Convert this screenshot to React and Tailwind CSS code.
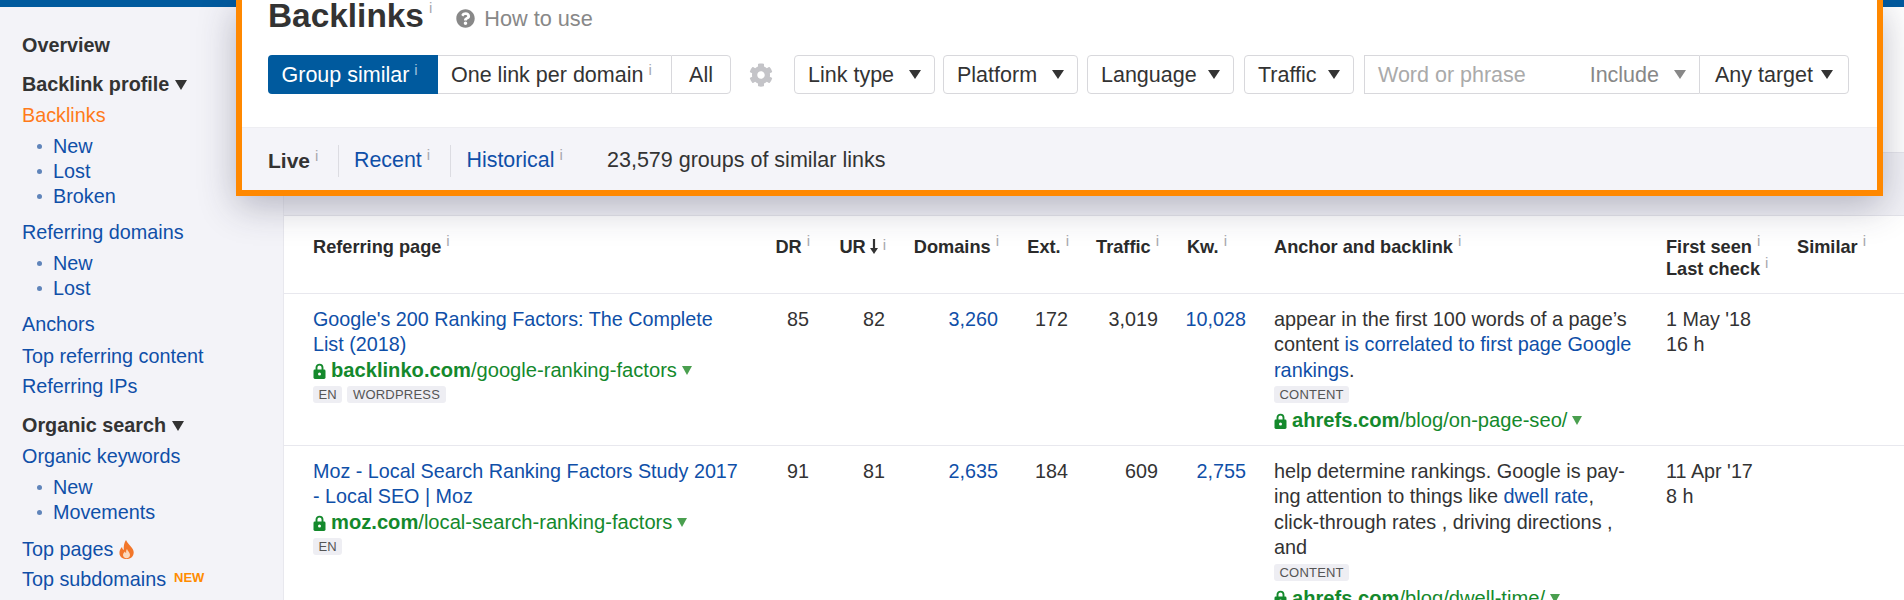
import React from "react";
import { FaCog, FaQuestionCircle } from "react-icons/fa";

const I = ({ className = "" }) => (
  <span className={`font-normal text-[#a8a8ae] text-[15px] leading-[0] align-[7px] ml-[5px] ${className}`}>i</span>
);

const Caret = ({ w = 12, h = 9, color = "#333", className = "" }) => (
  <svg width={w} height={h} viewBox="0 0 12 9" preserveAspectRatio="none" className={`shrink-0 ${className}`}>
    <polygon points="0,0 12,0 6,9" fill={color} />
  </svg>
);

const Lock = () => (
  <svg width="13" height="16" viewBox="0 0 13 16" className="shrink-0 mr-[5px]">
    <path d="M3.5 7V4.6a3 3 0 0 1 6 0V7" fill="none" stroke="#14892c" strokeWidth="1.9" />
    <rect x="0.5" y="6.5" width="12" height="9.5" rx="1.4" fill="#14892c" />
    <circle cx="6.5" cy="11" r="1.5" fill="#fff" />
  </svg>
);

const Flame = () => (
  <svg width="15" height="19" viewBox="0 0 15 19" className="ml-[6px] shrink-0">
    <path d="M7 0C8 3 11 5 13 8C14.5 10 15 12 14.5 14C14 17 11 19 7.5 19C4 19 1 17 .5 14C0 11 1.5 8.5 3 7C3.3 8.5 3.8 9.5 4.8 10C4.5 6 5 3 7 0Z" fill="#f2762a" />
    <path d="M8 9C8.5 11 11 12.5 11 15C11 17 9.5 18.2 7.5 18.2C5.5 18.2 4 17 4 15C4 13.5 5 12.5 6 11.5C6.3 12.5 6.7 13 7.2 13C7 11.5 7.2 10 8 9Z" fill="#fbd9bd" />
  </svg>
);

const Url = ({ domain, path }) => (
  <div className="flex items-center text-[20.15px] leading-[25.4px] text-[#14892c] whitespace-nowrap">
    <Lock />
    <span><span className="font-bold">{domain}</span>{path}</span>
    <Caret w={10} h={9} color="#4a9f4f" className="ml-[5px]" />
  </div>
);

const Tag = ({ children }) => (
  <span className="inline-flex items-center h-[17px] px-[5.5px] mr-[5px] rounded-[3px] bg-[#eeeef3] text-[#555] text-[13px] tracking-[0.2px] leading-none">
    {children}
  </span>
);

const A = ({ children }) => <a className="text-[#0f4fa8]">{children}</a>;

const NavHead = ({ children, className = "", caret }) => (
  <div className={`h-[25px] leading-[25px] font-bold text-[#333] flex items-center ${className}`}>
    {children}
    {caret && <Caret w={12} h={10} color="#333" className="ml-[6px]" />}
  </div>
);

const NavLink = ({ children, className = "" }) => (
  <div className={`h-[25px] leading-[25px] text-[#0f4fa8] flex items-center ${className}`}>{children}</div>
);

const Sub = ({ children, className = "" }) => (
  <div className={`h-[25px] leading-[25px] text-[#0f4fa8] flex items-center pl-[15px] ${className}`}>
    <span className="w-[5px] h-[5px] rounded-full bg-[#5f84ba] mr-[11px]" />
    {children}
  </div>
);

const Btn = ({ children, w, className = "" }) => (
  <div className={`h-[39px] flex items-center justify-between px-[13px] bg-white border-[1.5px] border-[#d8d8dc] rounded-[4px] text-[#333] ${w} ${className}`}>
    <span className="pt-[2px]">{children}</span>
    <Caret />
  </div>
);

const grid = "grid grid-cols-[430px_66px_76px_113px_70px_90px_88px_420px_131px_1fr] pl-[29px]";

const Th = ({ children, className = "" }) => (
  <div className={`text-right whitespace-nowrap -mr-[1px] ${className}`}>{children}</div>
);

const Num = ({ children, link }) => (
  <div className={`text-right ${link ? "text-[#0f4fa8]" : "text-[#333]"}`}>{children}</div>
);

export default function App() {
  return (
    <div className="relative w-[1904px] h-[600px] overflow-hidden bg-[#f3f3f8] font-['Liberation_Sans',Arial,sans-serif] text-[19.8px] text-[#333]">
      <div className="h-[7px] bg-[#005a9e]" />
      <div className="flex h-[593px]">
        <aside className="w-[284px] shrink-0 pl-[22px] pt-[26px] border-r border-[#e8e8ee]">
          <NavHead>Overview</NavHead>
          <NavHead caret className="mt-[14px]">Backlink profile</NavHead>
          <NavLink className="mt-[6px] !text-[#ff7a1a]">Backlinks</NavLink>
          <Sub className="mt-[6px]">New</Sub>
          <Sub>Lost</Sub>
          <Sub>Broken</Sub>
          <NavLink className="mt-[11px]">Referring domains</NavLink>
          <Sub className="mt-[6px]">New</Sub>
          <Sub>Lost</Sub>
          <NavLink className="mt-[11px]">Anchors</NavLink>
          <NavLink className="mt-[7px]">Top referring content</NavLink>
          <NavLink className="mt-[5px]">Referring IPs</NavLink>
          <NavHead caret className="mt-[14px]">Organic search</NavHead>
          <NavLink className="mt-[6px]">Organic keywords</NavLink>
          <Sub className="mt-[6px]">New</Sub>
          <Sub>Movements</Sub>
          <NavLink className="mt-[12px]">
            Top pages
            <Flame />
          </NavLink>
          <NavLink className="mt-[5px]">
            Top subdomains
            <span className="ml-[8px] mb-[5px] text-[13px] font-bold leading-none text-[#ff8c00]">NEW</span>
          </NavLink>
        </aside>

        <main className="flex-1 min-w-0">
          <div className="h-[145px] bg-white" />
          <div className="h-[63px] bg-[#f1f1f6] border-t border-[#e6e6ec]" />
          <section className="bg-white h-[385px] text-[19.76px] leading-[25.4px] border-t border-[#e4e4ea]">
            <div className={`${grid} h-[78px] pt-[20px] border-b-[1.5px] border-[#e8e8ee] text-[18.2px] leading-[22px] font-bold text-[#2b2b2b]`}>
              <div>Referring page<I /></div>
              <Th>DR<I /></Th>
              <Th className="flex justify-end items-start">
                UR
                <svg width="8" height="15" viewBox="0 0 8 15" className="ml-[4px] mt-[3px]">
                  <path d="M4 0v10" stroke="#333" strokeWidth="2.2" />
                  <polygon points="0,9 8,9 4,15" fill="#333" />
                </svg>
                <I className="leading-[18px]" />
              </Th>
              <Th>Domains<I /></Th>
              <Th>Ext.<I /></Th>
              <Th>Traffic<I /></Th>
              <Th className="pr-[20px]">Kw.<I /></Th>
              <div className="pl-[28px]">Anchor and backlink<I /></div>
              <div>
                <div>First seen<I /></div>
                <div>Last check<I /></div>
              </div>
              <div>Similar<I /></div>
            </div>

            <div className={`${grid} pt-[13px] h-[152px] border-b-[1.5px] border-[#e8e8ee]`}>
              <div>
                <A>Google's 200 Ranking Factors: The Complete List (2018)</A>
                <Url domain="backlinko.com" path="/google-ranking-factors" />
                <div className="flex mt-[3px]"><Tag>EN</Tag><Tag>WORDPRESS</Tag></div>
              </div>
              <Num>85</Num>
              <Num>82</Num>
              <Num link>3,260</Num>
              <Num>172</Num>
              <Num>3,019</Num>
              <Num link>10,028</Num>
              <div className="pl-[28px] pr-[26px] text-[19.85px]">
                appear in the first 100 words of a page’s content <A>is correlated to first page Google rankings</A>.
                <div className="flex mt-[3px] mb-[5px]"><Tag>CONTENT</Tag></div>
                <Url domain="ahrefs.com" path="/blog/on-page-seo/" />
              </div>
              <div>
                <div>1 May '18</div>
                <div>16 h</div>
              </div>
              <div />
            </div>

            <div className={`${grid} pt-[13px]`}>
              <div>
                <A>Moz - Local Search Ranking Factors Study 2017 - Local SEO | Moz</A>
                <Url domain="moz.com" path="/local-search-ranking-factors" />
                <div className="flex mt-[3px]"><Tag>EN</Tag></div>
              </div>
              <Num>91</Num>
              <Num>81</Num>
              <Num link>2,635</Num>
              <Num>184</Num>
              <Num>609</Num>
              <Num link>2,755</Num>
              <div className="pl-[28px] pr-[26px] text-[19.85px]">
                help determine rankings. Google is pay-ing attention to things like <A>dwell rate</A>, click-through rates , driving directions , and
                <div className="flex mt-[3px] mb-[5px]"><Tag>CONTENT</Tag></div>
                <Url domain="ahrefs.com" path="/blog/dwell-time/" />
              </div>
              <div>
                <div>11 Apr '17</div>
                <div>8 h</div>
              </div>
              <div />
            </div>
          </section>
        </main>
      </div>

      <div className="absolute left-[236px] top-0 w-[1647px] h-[196px] flex flex-col bg-white border-x-[6px] border-b-[6px] border-[#ff8800] shadow-[0_10px_35px_rgba(40,40,70,0.3)]">
        <div className="h-[127px] px-[26px]">
          <div className="h-[32px] flex items-center">
            <span className="text-[33.4px] font-bold leading-none text-[#333]">Backlinks<I className="!align-[14px]" /></span>
            <FaQuestionCircle className="ml-[24px] mt-[4px] w-[19px] h-[19px] text-[#888]" />
            <span className="ml-[9px] mt-[6px] text-[21.7px] leading-none text-[#888]">How to use</span>
          </div>
          <div className="mt-[23px] flex items-center text-[21.5px] text-[#333]">
            <div className="h-[39px] w-[170px] flex items-center pl-[13.5px] pt-[2px] bg-[#005a9e] text-white rounded-l-[4px]">
              <span>Group similar<I className="!text-[#9cc0dd]" /></span>
            </div>
            <div className="h-[39px] w-[233px] flex items-center pl-[13px] pt-[2px] border-y-[1.5px] border-[#d8d8dc] bg-white">
              <span>One link per domain<I /></span>
            </div>
            <div className="h-[39px] w-[60px] flex items-center justify-center pt-[2px] border-[1.5px] border-[#d8d8dc] rounded-r-[4px]">All</div>
            <FaCog className="ml-[18px] w-[24px] h-[24px] text-[#c4c4c8]" />
            <Btn w="w-[141px] ml-[21px]">Link type</Btn>
            <Btn w="w-[135px] ml-[8px]">Platform</Btn>
            <Btn w="w-[147px] ml-[9px]">Language</Btn>
            <Btn w="w-[110px] ml-[10px]">Traffic</Btn>
            <div className="ml-[10px] h-[39px] w-[335px] flex items-center pl-[13px] pr-[13px] border-y-[1.5px] border-l-[1.5px] border-[#d8d8dc]">
              <span className="text-[#aaa] pt-[2px]">Word or phrase</span>
              <span className="ml-auto text-[#888] pt-[2px]">Include</span>
              <Caret color="#888" className="ml-[15px]" />
            </div>
            <Btn w="w-[150px] rounded-l-none !px-[15px]">Any target</Btn>
          </div>
        </div>
        <div className="flex-1 flex items-center px-[26px] pt-[3px] bg-[#f4f4f9] border-t border-[#eeeef2] text-[21.4px]">
          <div className="font-bold text-[#333] w-[71px] h-[32px] flex items-center border-r-[1.5px] border-[#dcdce2]">
            <span className="whitespace-nowrap text-[21px]">Live<I /></span>
          </div>
          <div className="w-[112px] h-[32px] pl-[15px] flex items-center border-r-[1.5px] border-[#dcdce2] text-[#0f4fa8]">
            <span className="whitespace-nowrap">Recent<I /></span>
          </div>
          <div className="pl-[15.5px] text-[#0f4fa8] whitespace-nowrap w-[156px]">Historical<I /></div>
          <div className="text-[21.5px] whitespace-nowrap">23,579 groups of similar links</div>
        </div>
      </div>
    </div>
  );
}
